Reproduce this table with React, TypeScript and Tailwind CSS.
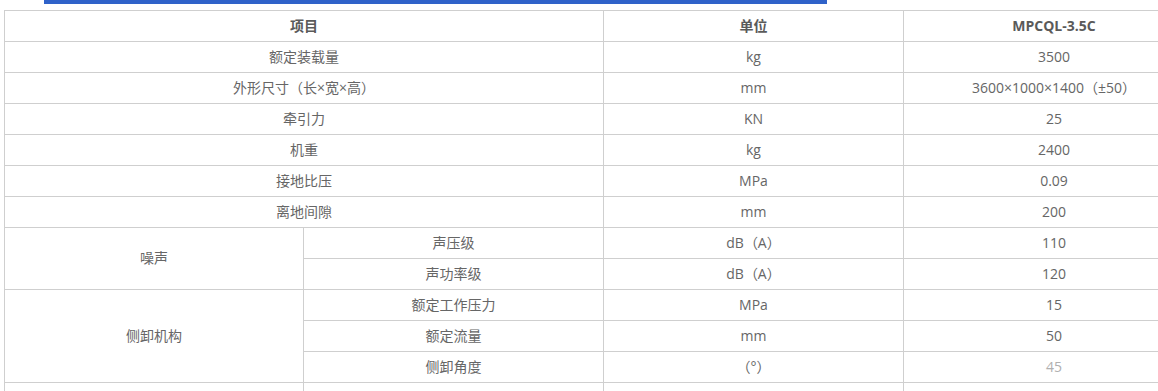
import React from "react";

// 规格参数表
type Row = {
  group?: string;
  span?: number;
  name: string;
  unit: string;
  value: string;
  dim?: boolean;
};

const rows: Row[] = [
  { name: "额定装载量", unit: "kg", value: "3500" },
  { name: "外形尺寸（长×宽×高）", unit: "mm", value: "3600×1000×1400（±50）" },
  { name: "牵引力", unit: "KN", value: "25" },
  { name: "机重", unit: "kg", value: "2400" },
  { name: "接地比压", unit: "MPa", value: "0.09" },
  { name: "离地间隙", unit: "mm", value: "200" },
  { group: "噪声", span: 2, name: "声压级", unit: "dB（A）", value: "110" },
  { group: "", name: "声功率级", unit: "dB（A）", value: "120" },
  { group: "侧卸机构", span: 3, name: "额定工作压力", unit: "MPa", value: "15" },
  { group: "", name: "额定流量", unit: "mm", value: "50" },
  { group: "", name: "侧卸角度", unit: "（°）", value: "45", dim: true },
  { group: " ", span: 1, name: "", unit: "", value: "" },
];

const cell = "border border-[#cfcfcf] text-center align-middle p-0 pb-[2px] h-[31px]";

export default function App() {
  return (
    <div
      className="h-[391px] w-full overflow-hidden bg-white text-[14px] text-[#666]"
      style={{ fontFamily: '"Open Sans", "Noto Sans CJK SC", sans-serif' }}
    >
      <div className="ml-[44px] h-[4px] w-[783px] bg-[#2f62c9]" />
      <table className="ml-[4px] mt-[6px] w-[1200px] table-fixed border-collapse">
        <colgroup>
          <col className="w-[299px]" />
          <col className="w-[300px]" />
          <col className="w-[300px]" />
          <col className="w-[301px]" />
        </colgroup>
        <tbody>
          <tr>
            <td colSpan={2} className={`${cell} font-bold text-[#5a5a5a]`}>项目</td>
            <td className={`${cell} font-bold text-[#5a5a5a]`}>单位</td>
            <td className={`${cell} font-bold text-[#5a5a5a]`}>MPCQL-3.5C</td>
          </tr>
          {rows.map((r, i) => (
            <tr key={i}>
              {r.group === undefined ? (
                <td colSpan={2} className={cell}>{r.name}</td>
              ) : (
                <>
                  {r.span ? (
                    <td rowSpan={r.span} className={cell}>{r.group}</td>
                  ) : null}
                  <td className={cell}>{r.name}</td>
                </>
              )}
              <td className={cell}>{r.unit}</td>
              <td className={`${cell} ${r.dim ? "text-[#b0b0b0]" : ""}`}>{r.value}</td>
            </tr>
          ))}
        </tbody>
      </table>
    </div>
  );
}
